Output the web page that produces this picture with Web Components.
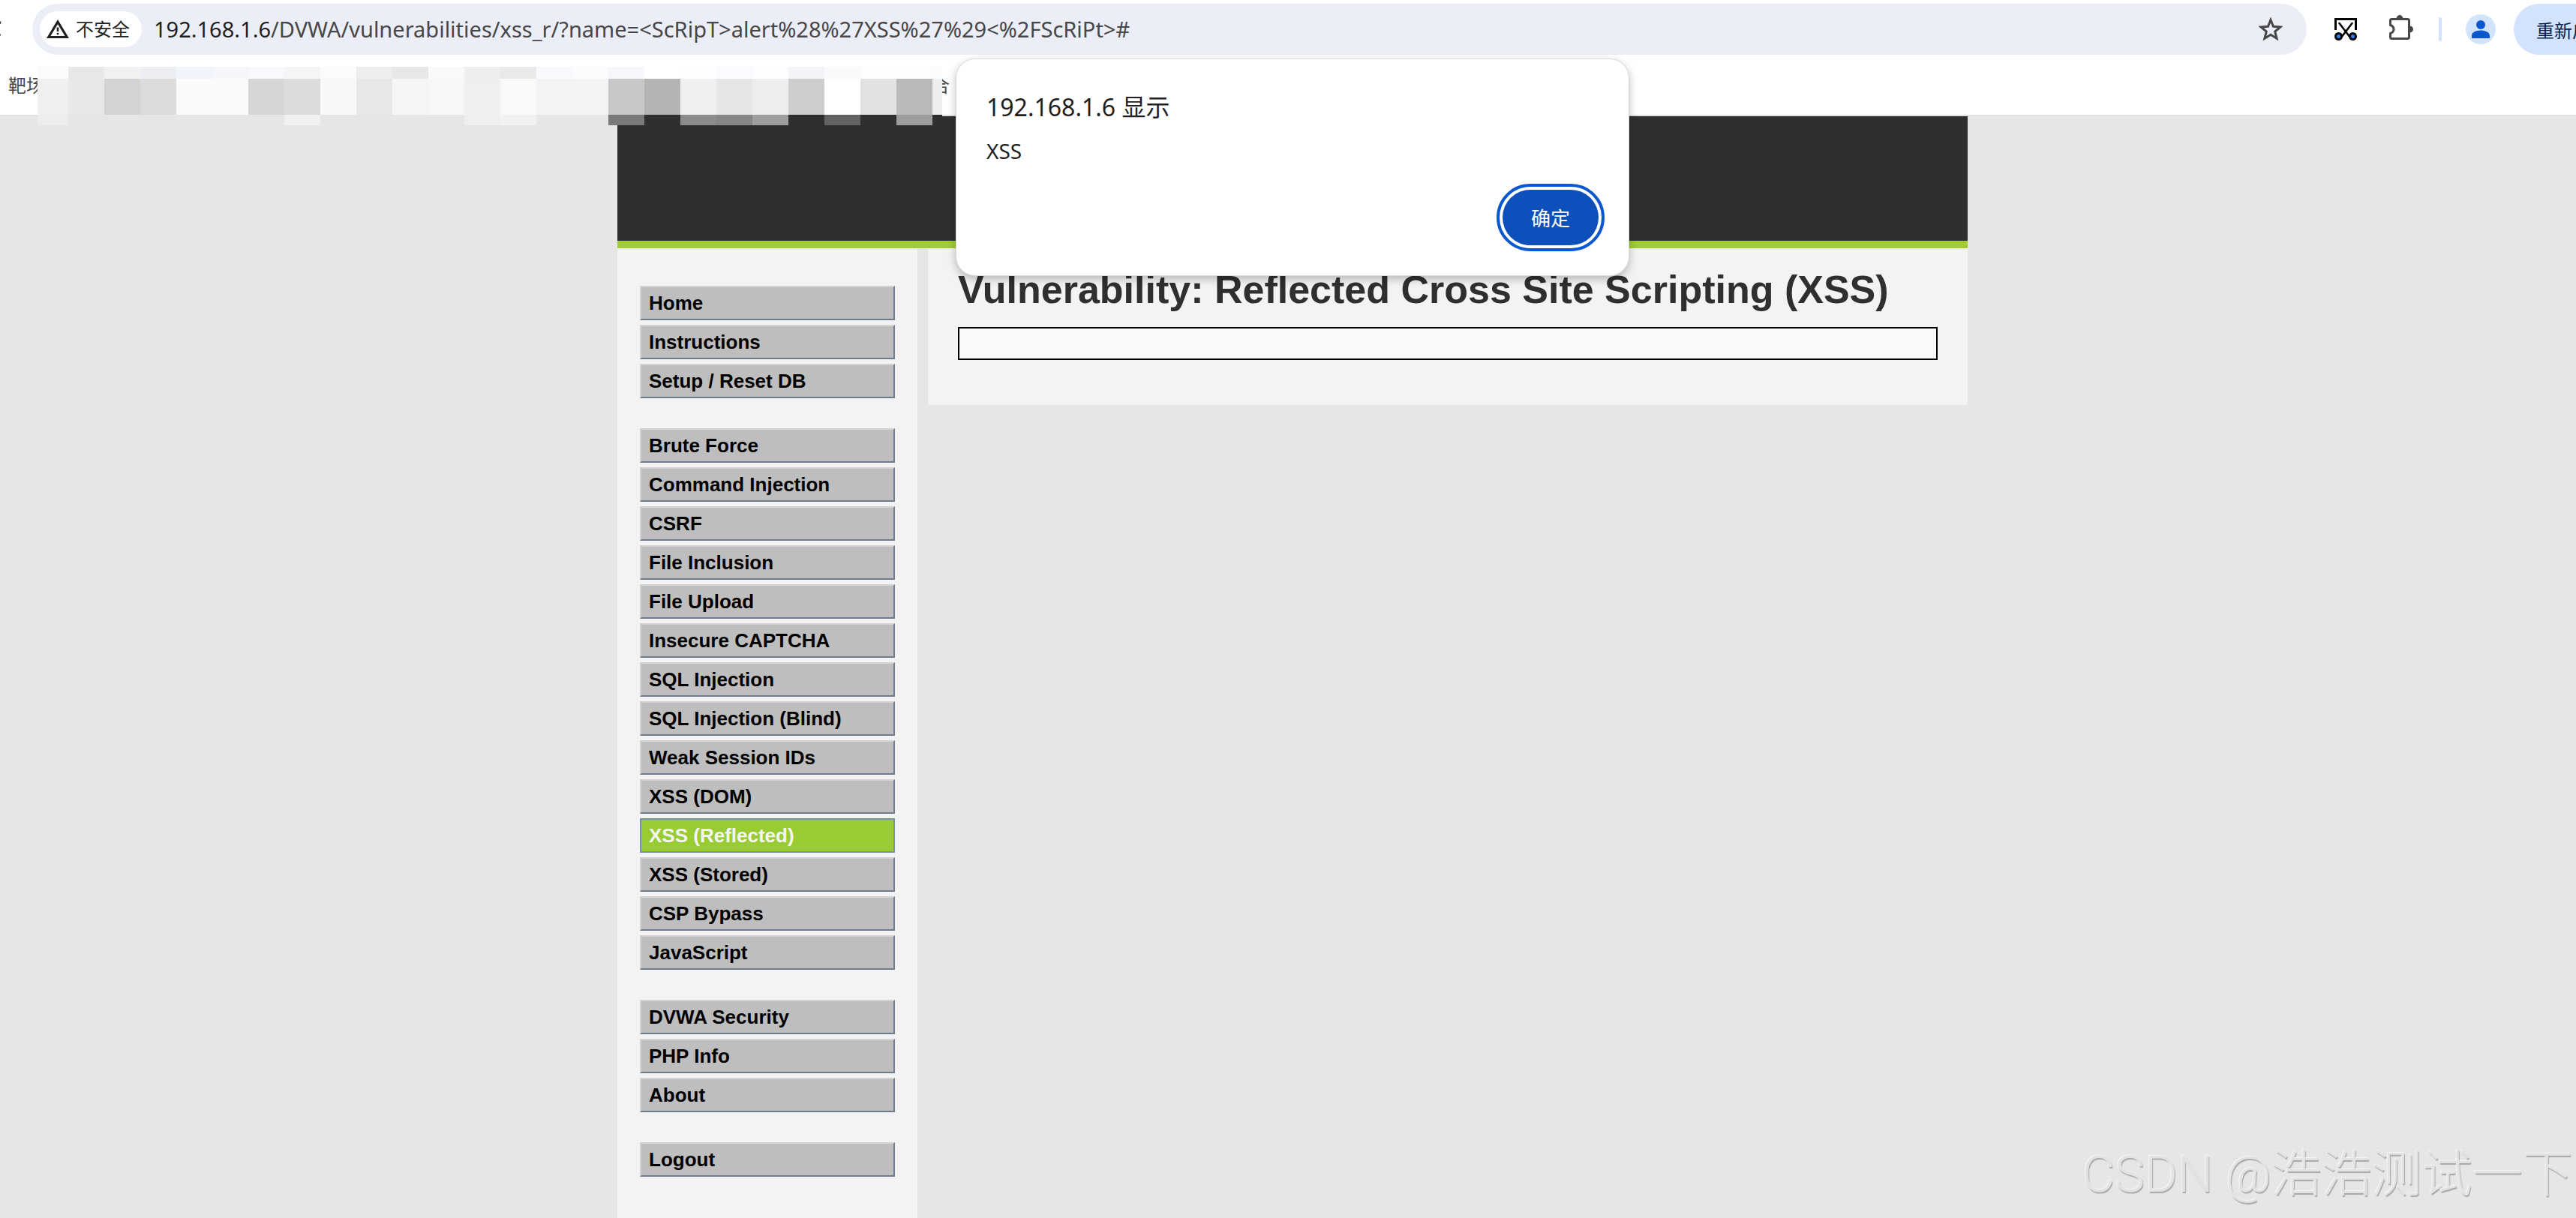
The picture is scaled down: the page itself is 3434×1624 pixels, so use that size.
<!DOCTYPE html>
<html lang="zh-CN">
<head>
<meta charset="utf-8">
<title>Vulnerability: Reflected Cross Site Scripting (XSS)</title>
<style>
  body { margin: 0; background: #e6e6e6; font-family: "Liberation Sans", Arial, sans-serif; }
</style>
</head>
<body>
<browser-window>
  <browser-toolbar slot="chrome"></browser-toolbar>
  <bookmarks-bar slot="chrome"></bookmarks-bar>
  <dvwa-page>
    <menu-block slot="menu">
      <menu-item>Home</menu-item>
      <menu-item>Instructions</menu-item>
      <menu-item>Setup / Reset DB</menu-item>
    </menu-block>
    <menu-block slot="menu">
      <menu-item>Brute Force</menu-item>
      <menu-item>Command Injection</menu-item>
      <menu-item>CSRF</menu-item>
      <menu-item>File Inclusion</menu-item>
      <menu-item>File Upload</menu-item>
      <menu-item>Insecure CAPTCHA</menu-item>
      <menu-item>SQL Injection</menu-item>
      <menu-item>SQL Injection (Blind)</menu-item>
      <menu-item>Weak Session IDs</menu-item>
      <menu-item>XSS (DOM)</menu-item>
      <menu-item selected>XSS (Reflected)</menu-item>
      <menu-item>XSS (Stored)</menu-item>
      <menu-item>CSP Bypass</menu-item>
      <menu-item>JavaScript</menu-item>
    </menu-block>
    <menu-block slot="menu">
      <menu-item>DVWA Security</menu-item>
      <menu-item>PHP Info</menu-item>
      <menu-item>About</menu-item>
    </menu-block>
    <menu-block slot="menu">
      <menu-item>Logout</menu-item>
    </menu-block>
    <span slot="title">Vulnerability: Reflected Cross Site Scripting (XSS)</span>
  </dvwa-page>
  <alert-dialog slot="overlay" origin="192.168.1.6 显示">XSS</alert-dialog>
  <water-mark slot="overlay">CSDN @浩浩测试一下</water-mark>
</browser-window>

<script>
  const UI_FONT = '"Noto Sans", "Noto Sans CJK SC", sans-serif';

  function define(name, html, setup) {
    const template = document.createElement('template');
    template.innerHTML = html;
    customElements.define(name, class extends HTMLElement {
      constructor() {
        super();
        this.attachShadow({ mode: 'open' }).append(template.content.cloneNode(true));
      }
      connectedCallback() {
        if (setup && !this.ready) setup(this, this.shadowRoot);
        this.ready = true;
      }
    });
  }

  define('browser-window', `
    <style>
      :host { display: flex; flex-direction: column; position: relative; min-height: 100vh; overflow: hidden; }
      .chrome { background: #fff; border-bottom: 2px solid #e0e0e0; }
      .view { flex: 1; display: flex; flex-direction: column; padding-left: 12px; }
    </style>
    <div class="chrome"><slot name="chrome"></slot></div>
    <div class="view"><slot></slot></div>
    <slot name="overlay"></slot>`);

  define('browser-toolbar', `
    <style>
      :host { display: flex; align-items: center; height: 78px; font-family: ${UI_FONT}; overflow: hidden; }
      svg { display: block; flex: none; }
      button { border: 0; margin: 0; padding: 0; background: none; font: inherit; color: inherit; flex: none; }
      .reload { width: 43px; }
      .omnibox { flex: 1; min-width: 0; display: flex; align-items: center; height: 68px; box-sizing: border-box;
        border-radius: 34px; background: #ebeef7; padding: 0 32px 0 10px; }
      .chip { display: flex; align-items: center; gap: 9px; height: 48px; padding: 0 16px 0 9px; border-radius: 24px;
        background: #fff; color: #1f1f1f; font-size: 24px; line-height: 48px; margin-right: 16px; }
      label { font-size: 29px; line-height: 40px; color: #1f1f1f; }
      input { flex: 1; min-width: 0; border: 0; padding: 0; background: none; outline: 0; font-family: inherit;
        font-size: 29px; line-height: 40px; height: 40px; color: #474747; }
      .tools { display: flex; align-items: center; flex: none; padding-left: 36px; width: 323px; }
      .puzzle { margin-left: 40px; }
      .rule { flex: none; width: 4px; height: 32px; border-radius: 2px; background: #d3e3fd; margin-left: 32px; }
      .avatar { margin-left: 32px; }
      .update { margin-left: 24px; height: 68px; padding: 0 30px; border-radius: 34px; background: #d3e3fd;
        color: #041e49; font-size: 24px; white-space: nowrap; }
    </style>
    <button class="reload" aria-label="reload">
      <svg width="43" height="40" viewBox="0 0 43 40"><path d="M0 13V10.500h1.500M0 27.500h1" fill="none" stroke="#474747" stroke-width="2"/></svg>
    </button>
    <div class="omnibox">
      <button class="chip">
        <svg width="30" height="26" viewBox="0 0 30 26"><path d="M15 0 30 25H0ZM15 6.200 5.400 22H24.600Z" fill="#1f1f1f" fill-rule="evenodd"/><path d="M13.700 10.500h2.600v5.500h-2.600zM13.700 17.800h2.600v2.500h-2.600z" fill="#1f1f1f"/></svg>
        <span>不安全</span>
      </button>
      <label for="url">192.168.1.6</label>
      <input id="url" type="text" spellcheck="false" value="/DVWA/vulnerabilities/xss_r/?name=&lt;ScRipT&gt;alert%28%27XSS%27%29&lt;%2FScRiPt&gt;#">
      <button aria-label="bookmark">
        <svg width="32" height="32" viewBox="0 0 32 32"><path d="M16 3.500 19.500 12.300 29 13 21.700 19 24.100 28.300 16 23.300 7.900 28.300 10.300 19 3 13 12.500 12.300Z" fill="none" stroke="#474747" stroke-width="3"/></svg>
      </button>
    </div>
    <div class="tools">
      <button aria-label="screenshot">
        <svg width="32" height="32" viewBox="0 0 32 32"><path d="M2.500 17V2.500H29.500V17" fill="none" stroke="#000" stroke-width="3"/><path d="M7.500 8 20.500 25M24.500 8 11.500 25" stroke="#000" stroke-width="2.600" stroke-linecap="round"/><circle cx="6.500" cy="25.500" r="4" fill="#2a84f8" stroke="#000" stroke-width="3"/><circle cx="25.500" cy="25.500" r="4" fill="#2a84f8" stroke="#000" stroke-width="3"/></svg>
      </button>
      <button class="puzzle" aria-label="extensions">
        <svg width="36" height="38" viewBox="0 0 36 38"><path d="M5.500 5.500H26.500Q28.500 5.500 28.500 7.500V29.500Q28.500 31.500 26.500 31.500H5.500Q3.500 31.500 3.500 29.500V24.500Q8 23 8 19T3.500 13.500V7.500Q3.500 5.500 5.500 5.500Z" fill="none" stroke="#474747" stroke-width="3"/><path d="M12 5a4 4.500 0 0 1 8 0zM29.500 15a4 4 0 0 1 0 8z" fill="#474747" stroke="#474747"/></svg>
      </button>
      <div class="rule"></div>
      <button class="avatar" aria-label="profile">
        <svg width="40" height="40" viewBox="0 0 40 40"><circle cx="20" cy="20" r="20" fill="#d3e3fd"/><circle cx="20" cy="14" r="6" fill="#0b57d0"/><path d="M8 32V28.500C8 23.500 15 21.500 20 21.500S32 23.500 32 28.500V32Z" fill="#0b57d0"/></svg>
      </button>
      <button class="update">重新启动即可更新</button>
    </div>`);

  const MOSAIC = [
    'fbfbfb e8e8e8 f1f1f1 edeef4 f2f4fb f4f6fc f7f9fe f3f6f5 fafbfd ededed e8e8e8 f9f9f9 eeeeee e9e9e9 f7f9fe fbfcfe f5f7fb ffffff fdfeff f9fbff fcfdff f2f4fa f9fafc fdfdfe fcfdfe fcfcfc',
    'f0f0f0 e8e8e8 d3d3d3 dcdcdc fafafa fafafa d6d6d6 dcdcdc f8f8f8 e7e7e7 f5f5f5 f7f7f7 efefef f9f9f9 f3f3f3 f4f4f4 c8c8c8 b4b4b4 f0f0f0 e5e5e5 ededed cecece ffffff e2e2e2 bababa eeeeee',
    'ededed e6e6e6 e6e6e6 e6e6e6 e6e6e6 e6e6e6 e6e6e6 f1f1f1 e6e6e6 e6e6e6 e6e6e6 e6e6e6 efefef f2f2f2 e6e6e6 e6e6e6 797979 2f2f2f 8b8b8b 868686 9e9e9e 2f2f2f 626262 2f2f2f 9d9d9d 2f2f2f'
  ];

  define('bookmarks-bar', `
    <style>
      :host { display: flex; align-items: center; position: relative; z-index: 1; height: 75px; box-sizing: border-box;
        padding: 0 0 3px 11px; font: 24px/36px ${UI_FONT}; color: #474747; }
      .last { margin-left: 1183px; }
      .mosaic { position: absolute; left: 50px; top: 11px; display: grid;
        grid-template-columns: 41px repeat(24, 48px) 13px; grid-template-rows: 16px 48px 14px; }
    </style>
    <span>靶场</span><span class="last">合</span>
    <div class="mosaic"></div>`,
    (host, root) => {
      const grid = root.querySelector('.mosaic');
      MOSAIC.join(' ').split(' ').forEach(color => {
        const cell = document.createElement('i');
        cell.style.background = '#' + color;
        grid.append(cell);
      });
    });

  define('dvwa-page', `
    <style>
      :host { flex: 1; display: flex; flex-direction: column; width: 100%; max-width: 1800px; margin: 0 auto; }
      header { height: 166px; background: #2f2f2f; border-bottom: 10px solid #a1cc33; }
      .body { flex: 1; display: flex; gap: 14px; }
      nav { width: 340px; padding: 50px 30px; background: #f3f3f3; display: flex; flex-direction: column; gap: 40px; }
      main { flex: 1; align-self: flex-start; background: #f3f3f3; padding: 20px 40px 60px; }
      h1 { margin: 0 0 15px; font-size: 52px; line-height: 70px; font-weight: bold; color: #2f2f2f; white-space: nowrap; }
      .form { height: 40px; border: 2px solid #000; background: #f8faf9; }
    </style>
    <header></header>
    <div class="body">
      <nav><slot name="menu"></slot></nav>
      <main><h1><slot name="title"></slot></h1><div class="form"></div></main>
    </div>`);

  define('menu-block', `
    <style>:host { display: flex; flex-direction: column; gap: 6px; }</style>
    <slot></slot>`);

  define('menu-item', `
    <style>
      :host { display: block; }
      a { display: block; padding: 0 10px; border: 2px solid; border-color: #d3d3d3 #6e7b8f #6e7b8f #d3d3d3;
        background: #bebebe; color: #000; font-size: 26px; line-height: 42px; font-weight: bold; text-decoration: none; }
      :host([selected]) a { background: #9c3; border-color: #778fb5; color: #f4f4f4; }
    </style>
    <a href="#"><slot></slot></a>`);

  define('alert-dialog', `
    <style>
      :host { display: block; position: absolute; z-index: 2; top: 78px; left: 12px; right: 0; width: 898px; margin: 0 auto;
        font-family: ${UI_FONT}; color: #1f1f1f; }
      dialog { position: static; display: flex; flex-direction: column; width: auto; margin: 0; box-sizing: border-box;
        padding: 40px; border: 1px solid #dadcdc; border-radius: 26px; background: #fff; color: inherit;
        box-shadow: 0 4px 12px rgba(0, 0, 0, .25); }
      h2 { margin: 0 0 14px; font-size: 32px; line-height: 48px; font-weight: normal; }
      p { margin: 0 0 32px; font-size: 28px; line-height: 40px; }
      button { align-self: flex-end; width: 128px; height: 74px; border: 0; padding: 0; border-radius: 37px;
        background: #0e50bb; color: #fff; font-family: inherit; font-size: 26px;
        outline: 4px solid #0b57d0; outline-offset: 4px; }
    </style>
    <dialog open>
      <h2></h2>
      <p><slot></slot></p>
      <button>确定</button>
    </dialog>`,
    (host, root) => { root.querySelector('h2').textContent = host.getAttribute('origin'); });

  define('water-mark', `
    <style>
      :host { display: block; position: absolute; right: 4px; bottom: 10px; font: 300 67px/96px Roboto, "Noto Sans CJK SC", sans-serif;
        color: #e2e2e2; text-shadow: -1px -1px 1px #f6f6f6, 1px 2px 1px #a8a8a8; white-space: nowrap; pointer-events: none; }
    </style>
    <slot></slot>`);
</script>
</body>
</html>
